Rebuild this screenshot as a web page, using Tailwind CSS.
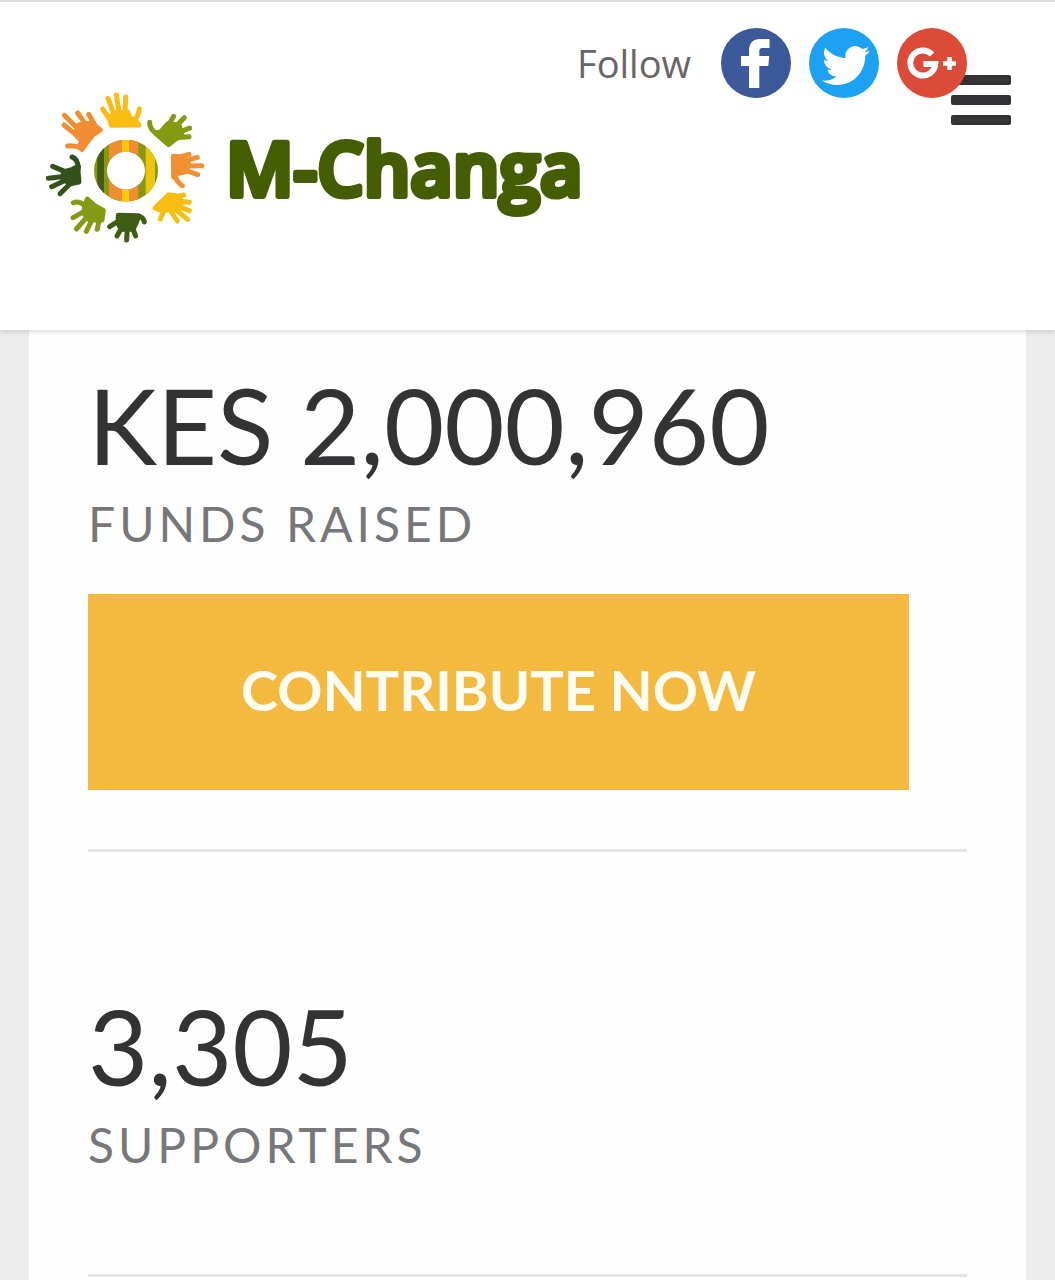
<!DOCTYPE html>
<html lang="en">
<head>
    <meta charset="UTF-8">
    <meta name="viewport" content="width=device-width, initial-scale=1.0">
    <title>M-Changa</title>
    <script src="https://cdn.jsdelivr.net/npm/@tailwindcss/browser@4"></script>
</head>
<body class="min-h-screen bg-[#eeedee] font-['Lato',sans-serif] text-[#333336]">
    <!-- Header -->
    <header class="relative z-10 flex h-[330px] items-start justify-between border-t-2 border-[#dcdcdc] bg-white pl-[35px] pr-[88px] shadow-[0_2px_5px_rgba(0,0,0,0.14)]">
        <a href="#" aria-label="M-Changa home" class="mt-[83px] w-[540px] shrink-0">
            <svg class="h-[165px] w-[560px] max-w-none overflow-visible" viewBox="0 0 1680 495">
                <defs>
                    <clipPath id="ring">
                        <path clip-rule="evenodd" d="M273 164a96 93 0 1 0 0 186a96 93 0 1 0 0-186zM273 200a57 57 0 1 1 0 114a57 57 0 1 1 0-114z"/>
                    </clipPath>
                </defs>
                <!-- Hands, clockwise from the top -->
                <g stroke-width="15" stroke-linecap="round" stroke-linejoin="round">
                    <g fill="#fbbc12" stroke="#fbbc12">
                        <path d="M229 121L224 101L237 84L278 82L287 102L300 105L312 120Z"/>
                        <path fill="none" d="M203 72L226 106M219 40L240 96M244 30L254 92M272 36L270 92M313 72Q310 98 290 112"/>
                    </g>
                    <g fill="#849a10" stroke="#849a10">
                        <path d="M361 144L378 140L398 117L432 120L442 153L420 163L401 179Z"/>
                        <path fill="none" d="M344 112Q343 133 366 146M416 94L397 127M448 98L410 136M464 129L425 145M462 155L420 158"/>
                    </g>
                    <g fill="#f29035" stroke="#f29035">
                        <path d="M415 214L443 216L460 235L453 260L427 266L416 276Z"/>
                        <path fill="none" d="M462 208L424 219M487 217L435 232M500 242L435 243M488 269L435 250M442 302Q422 290 420 266"/>
                    </g>
                    <g fill="#f9bd12" stroke="#f9bd12">
                        <path d="M401 329L423 332L442 349L432 373L405 374L378 376L360 369Z"/>
                        <path fill="none" d="M446 330L415 337M463 352L425 348M463 377L415 359M458 403L410 364M427 408L402 370M376 402L388 374"/>
                    </g>
                    <g fill="#3f5c13" stroke="#3f5c13">
                        <path d="M250 391L311 392L304 412L294 433L258 433L249 414Z"/>
                        <path fill="none" d="M224 425L254 406M246 453L265 420M275 465L277 422M302 453L289 420M328 411Q325 394 306 394"/>
                    </g>
                    <g fill="#849a15" stroke="#849a15">
                        <path d="M157 342L178 361L205 376L201 405L164 405L146 384L150 361Z"/>
                        <path fill="none" d="M115 353Q132 345 153 365M114 398L157 374M124 432L163 388M154 439L177 393M187 433L195 390"/>
                    </g>
                    <g fill="#315319" stroke="#315319">
                        <path d="M130 244L129 260L132 291L109 296L85 284L85 261L113 253Z"/>
                        <path fill="none" d="M111 216Q127 221 130 247M53 244L103 265M40 280L100 273M50 305L104 280M75 326L116 286"/>
                    </g>
                    <g fill="#f18d31" stroke="#f18d31">
                        <path d="M196 135L174 149L152 177L141 193L134 183L140 167L121 147L131 120L169 114Z"/>
                        <path fill="none" d="M98 183Q115 179 141 190M87 120L140 163M88 91L142 145M128 84L162 133M161 88L185 130"/>
                    </g>
                </g>
                <!-- Striped ring -->
                <g clip-path="url(#ring)">
                    <rect x="175" y="160" width="200" height="195" fill="#879711"/>
                    <rect x="187" y="160" width="20" height="195" fill="#435c12"/>
                    <rect x="222" y="160" width="39" height="195" fill="#ef8d2f"/>
                    <rect x="261" y="160" width="21" height="195" fill="#fbc80c"/>
                    <rect x="282" y="160" width="28" height="195" fill="#ef8d2f"/>
                    <rect x="332" y="160" width="28" height="195" fill="#efc50c"/>
                </g>
                <text x="573" y="332" class="fill-[#435d00] stroke-[#435d00] stroke-[18px] font-['Open_Sans',sans-serif] text-[220px] font-semibold [stroke-linecap:round] [stroke-linejoin:round]">M-Changa</text>
            </svg>
        </a>

        <nav aria-label="Follow" class="relative z-10 mt-[26px] flex shrink-0 items-center gap-[18px]">
            <span class="mr-3 font-['Open_Sans',sans-serif] text-[38px] leading-[70px] text-[#666666]">Follow</span>
            <a href="#" aria-label="Facebook">
                <svg class="size-[70px]" viewBox="0 0 70 70">
                    <circle cx="35" cy="35" r="35" fill="#3b5998"/>
                    <path fill="#fff" d="M28 60V38h-8V28h8v-5c0-8 4-12 11-12h9.500v9H42c-3 0-3.700 1.500-3.700 4v4h10l-1 10h-9v22z"/>
                </svg>
            </a>
            <a href="#" aria-label="Twitter">
                <svg class="size-[70px]" viewBox="0 0 70 70">
                    <circle cx="35" cy="35" r="35" fill="#1da1f2"/>
                    <path fill="#fff" transform="translate(13 13.500) scale(2)" d="M23.953 4.57a10 10 0 01-2.825.775 4.958 4.958 0 002.163-2.723c-.951.555-2.005.959-3.127 1.184a4.92 4.92 0 00-8.384 4.482C7.69 8.095 4.067 6.13 1.64 3.162a4.822 4.822 0 00-.666 2.475c0 1.71.87 3.213 2.188 4.096a4.904 4.904 0 01-2.228-.616v.06a4.923 4.923 0 003.946 4.827 4.996 4.996 0 01-2.212.085 4.936 4.936 0 004.604 3.417 9.867 9.867 0 01-6.102 2.105c-.39 0-.779-.023-1.17-.067a13.995 13.995 0 007.557 2.209c9.053 0 13.998-7.496 13.998-13.985 0-.21 0-.42-.015-.63A9.935 9.935 0 0024 4.59z"/>
                </svg>
            </a>
            <a href="#" aria-label="Google Plus">
                <svg class="size-[70px]" viewBox="0 0 70 70">
                    <circle cx="35" cy="35" r="35" fill="#dc4a38"/>
                    <path fill="none" stroke="#fff" stroke-width="6" d="M35 26.500A12.500 12.500 0 1 0 38.300 36H26.500"/>
                    <path fill="none" stroke="#fff" stroke-width="4.500" d="M46 35.500h13M52.500 29v13"/>
                </svg>
            </a>
        </nav>

        <button type="button" aria-label="Menu" class="absolute right-11 top-[73px] flex w-[60px] flex-col gap-[10px]">
            <span class="h-[10px] rounded-[2px] bg-[#333336]"></span>
            <span class="h-[10px] rounded-[2px] bg-[#333336]"></span>
            <span class="h-[10px] rounded-[2px] bg-[#333336]"></span>
        </button>
    </header>

    <!-- Campaign stats -->
    <main class="mx-[29px] min-h-[950px] bg-[#fefefe] px-[59px] pt-8">
        <section class="border-b-[3px] border-[#e4e4e4] pb-[59px]">
            <p class="text-[104px] leading-[126px]">KES 2,000,960</p>
            <p class="text-[48px] leading-[72px] tracking-[4px] text-[#77777a]">FUNDS RAISED</p>
            <button type="button" class="mt-[34px] block h-[196px] w-[821px] max-w-full bg-[#f4ba40] pb-1 text-[56px] font-bold text-[#fffdf2]">CONTRIBUTE NOW</button>
        </section>
        <section class="border-b-[3px] border-[#e4e4e4] pb-[93px] pt-[131px]">
            <p class="text-[104px] leading-[126px]">3,305</p>
            <p class="text-[48px] leading-[72px] tracking-[4px] text-[#77777a]">SUPPORTERS</p>
        </section>
    </main>
</body>
</html>
